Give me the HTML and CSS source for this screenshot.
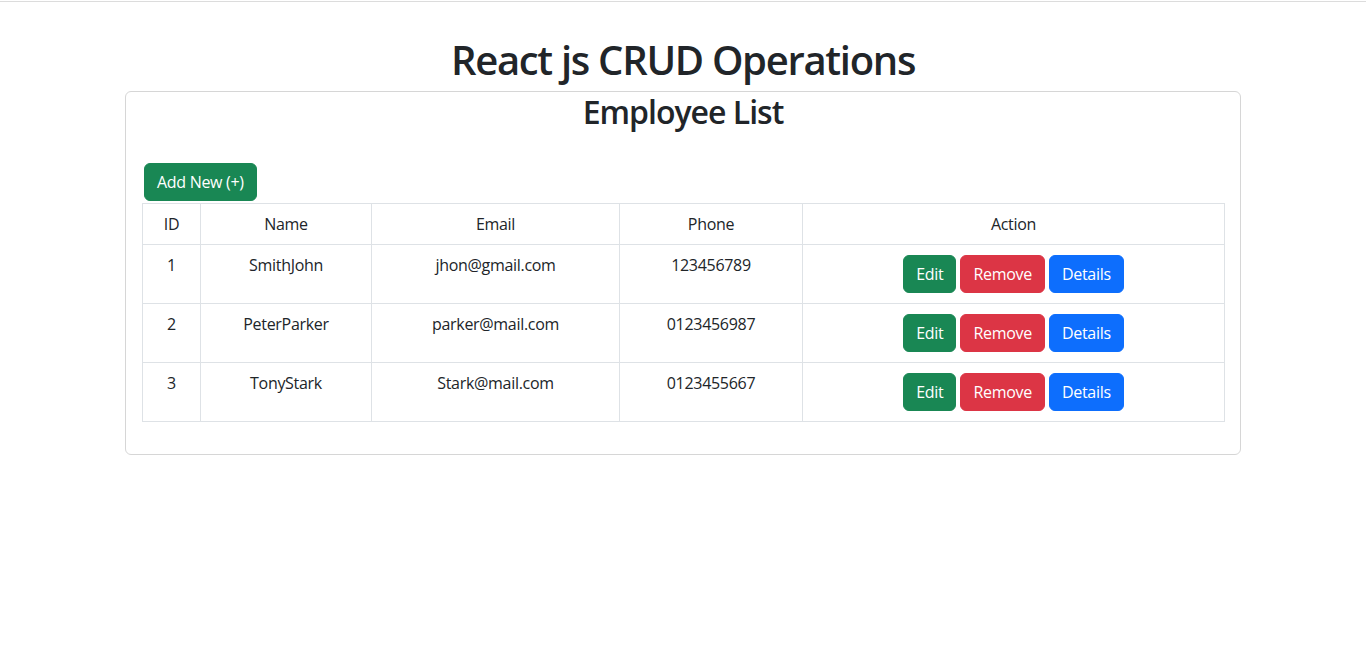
FILE: index.html
```html
<!DOCTYPE html>
<html lang="en">
<head>
<meta charset="utf-8">
<title>React js CRUD Operations</title>
<link rel="stylesheet" href="styles.css">
</head>
<body>
<div class="topline"></div>
<div class="container">
  <h1 class="title">React js CRUD Operations</h1>
  <div class="card">
    <div class="card-body">
      <h2 class="card-title">Employee List</h2>
      <div class="toolbar"><button class="btn btn-success">Add New (+)</button></div>
      <table class="table">
        <thead>
          <tr>
            <th class="c-id">ID</th>
            <th class="c-name">Name</th>
            <th class="c-email">Email</th>
            <th class="c-phone">Phone</th>
            <th class="c-action">Action</th>
          </tr>
        </thead>
        <tbody>
          <tr>
            <td>1</td><td>SmithJohn</td><td>jhon@gmail.com</td><td>123456789</td>
            <td><div class="actions"><button class="btn btn-success">Edit</button><button class="btn btn-danger">Remove</button><button class="btn btn-primary">Details</button></div></td>
          </tr>
          <tr>
            <td>2</td><td>PeterParker</td><td>parker@mail.com</td><td>0123456987</td>
            <td><div class="actions"><button class="btn btn-success">Edit</button><button class="btn btn-danger">Remove</button><button class="btn btn-primary">Details</button></div></td>
          </tr>
          <tr>
            <td>3</td><td>TonyStark</td><td>Stark@mail.com</td><td>0123455667</td>
            <td><div class="actions"><button class="btn btn-success">Edit</button><button class="btn btn-danger">Remove</button><button class="btn btn-primary">Details</button></div></td>
          </tr>
        </tbody>
      </table>
    </div>
  </div>
</div>
</body>
</html>
```
FILE: styles.css
```css
* { box-sizing: border-box; }
html, body { margin: 0; padding: 0; background: #fff; }
body {
  font-family: "Open Sans", "Noto Sans", sans-serif;
  font-size: 16px;
  line-height: 24px;
  color: #212529;
  letter-spacing: -0.3px;
}
.topline { height: 1px; margin-top: 1px; background: #dcdcdc; }
.container { width: 1116px; margin: 0 auto; }
.title {
  margin: 34px 0 7px;
  font-size: 40px;
  line-height: 48px;
  font-weight: 600;
  text-align: center;
  letter-spacing: -1.3px;
}
.card {
  border: 1px solid #d6d6d6;
  border-radius: 6px;
}
.card-body { padding: 0 16px 16px; }
.card-title {
  margin: 0;
  padding-top: 1px;
  font-size: 32px;
  line-height: 38px;
  font-weight: 600;
  text-align: center;
  letter-spacing: -1px;
}
.toolbar { margin-top: 30px; }
.btn {
  font-family: inherit;
  font-size: 16px;
  line-height: 24px;
  letter-spacing: -0.3px;
  padding: 6px 12px;
  border: 1px solid transparent;
  border-radius: 6px;
  color: #fff;
  margin: 2px;
  cursor: pointer;
}
.btn-success { background: #198754; border-color: #198754; }
.btn-danger { background: #dc3545; border-color: #dc3545; }
.btn-primary { background: #0d6efd; border-color: #0d6efd; }
.table {
  width: 100%;
  border-collapse: collapse;
  margin-bottom: 16px;
  table-layout: fixed;
}
.table th, .table td {
  border: 1px solid #dee2e6;
  padding: 8px;
  text-align: center;
  vertical-align: top;
  font-weight: 400;
}
.c-id { width: 58px; }
.c-name { width: 171px; }
.c-email { width: 248px; }
.c-phone { width: 183px; }
.c-action { width: 422px; }
.actions { display: flex; justify-content: center; }
```
